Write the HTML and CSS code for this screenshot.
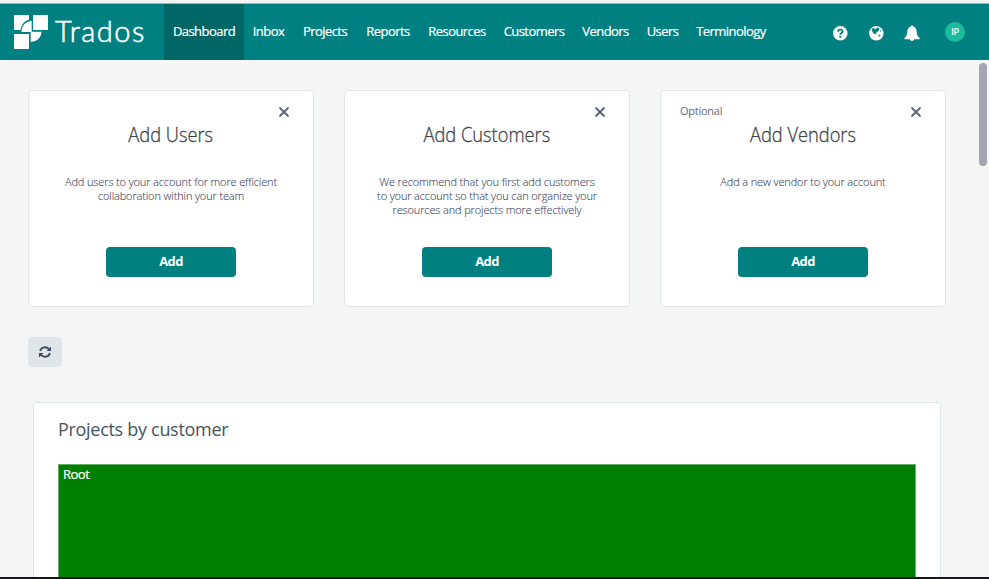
FILE: index.html
```html
<!DOCTYPE html>
<html lang="en">
<head>
<meta charset="utf-8">
<title>Trados</title>
<link rel="stylesheet" href="styles.css">
</head>
<body>
<header class="topbar">
  <a class="brand">
    <svg class="logo" viewBox="0 0 34 34" width="34" height="34"><path fill="#fff" d="M0 0H15V4.800C10.500 6 7.300 9.500 6.500 15H0zM19 0H34V15H19zM0 19H15V34H0zM7.500 17C7.500 10.500 11.500 6.300 17.700 6V16.800H27.500C27.300 22.500 23.500 26.500 16.700 27V17z"/></svg>
    <span class="wordmark">Trados</span>
  </a>
  <nav class="nav">
    <a class="on w-dash">Dashboard</a><a class="w-inbox">Inbox</a><a class="w-proj">Projects</a><a class="w-rep">Reports</a><a class="w-res">Resources</a><a class="w-cust">Customers</a><a class="w-vend">Vendors</a><a class="w-user">Users</a><a class="w-term">Terminology</a>
  </nav>
  <div class="tools">
    <svg viewBox="0 0 16 16" width="16" height="16"><circle cx="8.300" cy="8.300" r="7.200" fill="#fff"/><path d="M6 6.600C6.100 3.900 10.800 4 10.600 6.600C10.500 8 8.300 8 8.300 9.800" fill="none" stroke="#008080" stroke-width="1.900"/><rect x="7.300" y="10.800" width="2" height="2" fill="#008080"/></svg>
    <svg viewBox="0 0 16 16" width="16" height="16"><circle cx="8.300" cy="8.300" r="7.200" fill="#fff"/><path fill="#008080" d="M3.500 4.500L6 2.500L7 4.500L9.500 2.500L11.500 3.500L10.500 6L8.500 7.500L7.500 9.500L5 8zM12 4.500L13.500 6L12.500 7zM10.500 10L12.800 9.500L10.800 12.500z"/></svg>
    <svg viewBox="0 0 16 16" width="16" height="16"><path fill="#fff" d="M7.200 0.500H9V1.600C12 2.200 12.500 4.500 12.700 7C12.900 10 13.700 11.500 15.700 13V14.300H10C9.700 16.400 6.300 16.400 6 14.300H.5V13C2.300 11.500 3.100 10 3.300 7C3.500 4.500 4 2.200 7.200 1.600z"/></svg>
    <span class="avatar">IP</span>
  </div>
</header>
<main class="page">
  <section class="cards">
    <article class="card">
      <div class="card-top"><span></span><svg class="close" viewBox="0 0 10 10" width="10" height="10"><path d="M.5 .5L9.500 9.500M9.500 .5L.5 9.500"/></svg></div>
      <h2><span>Add Users</span></h2>
      <p>Add users to your account for more efficient<br>collaboration within your team</p>
      <button>Add</button>
    </article>
    <article class="card">
      <div class="card-top"><span></span><svg class="close" viewBox="0 0 10 10" width="10" height="10"><path d="M.5 .5L9.500 9.500M9.500 .5L.5 9.500"/></svg></div>
      <h2><span>Add Customers</span></h2>
      <p>We recommend that you first add customers<br>to your account so that you can organize your<br>resources and projects more effectively</p>
      <button>Add</button>
    </article>
    <article class="card">
      <div class="card-top"><span>Optional</span><svg class="close" viewBox="0 0 10 10" width="10" height="10"><path d="M.5 .5L9.500 9.500M9.500 .5L.5 9.500"/></svg></div>
      <h2><span>Add Vendors</span></h2>
      <p>Add a new vendor to your account</p>
      <button>Add</button>
    </article>
  </section>
  <button class="refresh"><svg viewBox="0 0 12 12" width="12" height="12"><path d="M1.200 5C2 1 7.500 0 10 3.300M10.800 7C10 11 4.500 12 2 8.700" fill="none" stroke="#434a60" stroke-width="1.900"/><path d="M12 .5V5H7.500zM0 11.500V7H4.500z" fill="#434a60"/></svg></button>
  <section class="panel">
    <h3>Projects by customer</h3>
    <div class="treemap">Root</div>
  </section>
</main>
<div class="thumb"></div>
</body>
</html>
```
FILE: styles.css
```css
* { box-sizing: border-box; }
body {
  margin: 0;
  height: 579px;
  overflow: hidden;
  display: flex;
  flex-direction: column;
  background: #f4f6f6;
  border-top: 3px solid #f3f3f3;
  border-bottom: 2px solid #17151d;
  font-family: "Open Sans", "Noto Sans", sans-serif;
}
.topbar {
  flex: none;
  height: 57px;
  display: flex;
  background: #008080;
  border-top: 1px solid #a9b1b1;
  color: #fff;
}
.brand { width: 164px; padding: 11px 0 0 14px; display: flex; }
.logo { flex: none; }
.wordmark { font: 300 29px/32px Lato, sans-serif; margin-left: 7px; letter-spacing: 1.5px; -webkit-text-stroke: .6px #fff; }
.nav { display: flex; width: 611px; }
.nav a { font-size: 13px; font-weight: 500; line-height: 55px; letter-spacing: -.55px; text-align: center; white-space: nowrap; flex: none; -webkit-text-stroke: .2px #fff; }
.nav .on { background: #006666; }
.w-dash { width: 80px; }
.w-inbox { width: 49px; }
.w-proj { width: 64px; }
.w-rep { width: 62px; }
.w-res { width: 76px; }
.w-cust { width: 78px; }
.w-vend { width: 65px; }
.w-user { width: 49px; }
.w-term { width: 88px; }
.tools { display: flex; gap: 20px; padding: 21px 0 0 57px; }
.avatar {
  width: 20px; height: 20px; border-radius: 50%;
  margin: -3px 0 0 5px;
  background: #1abc9c; font-size: 9px; line-height: 19px; text-align: center; letter-spacing: -.2px; -webkit-text-stroke: .2px #fff;
}
.page { flex: 1; min-height: 0; padding: 30px 0 0 28px; overflow: hidden; }
.cards { display: flex; gap: 30px; }
.card {
  width: 286px; height: 217px;
  display: flex; flex-direction: column; align-items: center;
  background: #fff; border: 1px solid #dfe6e9; border-radius: 4px;
}
.card-top { width: 100%; height: 31px; padding: 12px 24px 0 19px; display: flex; justify-content: space-between; font-size: 11px; line-height: 15px; letter-spacing: -.25px; color: #626b7c; }
.close { margin-top: 4px; fill: none; stroke: #606776; stroke-width: 2; }
.card h2 { margin: 0; font-size: 21px; line-height: 24px; height: 26px; font-weight: 300; color: #3b4246; white-space: nowrap; -webkit-text-stroke: .3px #3b4246; }
.card h2 span { display: inline-block; transform: scaleX(.87); }
.card p { margin: 27px 0 0; height: 43px; font-size: 11px; line-height: 14px; font-weight: 300; letter-spacing: -.14px; color: #3c435d; text-align: center; white-space: nowrap; -webkit-text-stroke: .1px #3c435d; }
.card button { width: 130px; height: 30px; margin-top: 29px; padding: 0 0 2px; border: 0; border-radius: 4px; background: #008080; color: #fff; font: 700 13px "Open Sans", sans-serif; letter-spacing: -.6px; }
.refresh { display: flex; align-items: center; justify-content: center; width: 34px; height: 30px; margin-top: 30px; padding: 0; border: 0; border-radius: 4px; background: #e0e5ea; }
.panel { width: 908px; height: 240px; margin: 35px 0 0 5px; padding: 12px 24px 0; background: #fff; border: 1px solid #dfe6e9; border-radius: 4px; }
.panel h3 { margin: 0; font-size: 18px; line-height: 28px; font-weight: 400; letter-spacing: -.3px; color: #455560; }
.treemap { height: 180px; margin-top: 21px; padding: 0 4px; background: #008000; border: 1px solid #66ad66; color: #fff; font-size: 13px; font-weight: 500; line-height: 18px; letter-spacing: -.5px; -webkit-text-stroke: .2px #fff; }
.thumb { position: absolute; left: 979px; top: 63px; width: 8px; height: 103px; border-radius: 4px; background: #a2a6b0; }
```
